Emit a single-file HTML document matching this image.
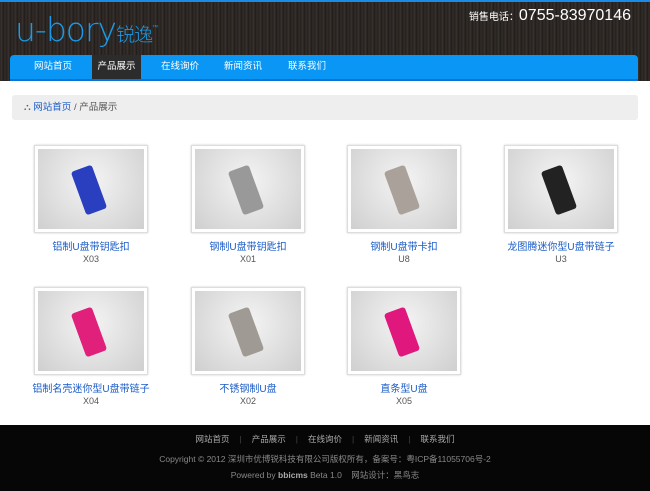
<!DOCTYPE html><html><head><meta charset="utf-8"><style>
*{margin:0;padding:0;box-sizing:border-box}
body{width:650px;height:491px;overflow:hidden;background:#fff;font-family:"Liberation Sans","Noto Sans CJK SC",sans-serif;font-size:9px;color:#555;position:relative}
.hd{position:absolute;left:0;top:0;width:650px;height:81px;background:repeating-linear-gradient(90deg,#2a2522 0,#3a3430 2px,#1e1a18 3px,#332d29 5px,#25201d 7px);border-top:2px solid #1a8ce8}
.logo{position:absolute;left:15px;top:8px;color:#1a9ae8;font-size:33px;letter-spacing:-1px;font-family:"DejaVu Sans",sans-serif;font-weight:200}
.logo span{font-size:19px;font-family:"Noto Sans CJK SC",sans-serif}
.tel{position:absolute;right:19px;top:5px;color:#fff;font-size:16px}
.tel small{font-size:10px}
.nav{position:absolute;left:10px;top:53px;width:628px;height:26px;background:#0996f5;border-radius:4px 4px 0 0;border-bottom:2px solid #0a74d6}
.nav a{position:absolute;top:0;height:24px;line-height:24px;color:#fff;font-size:9.5px}
.nav .on{background:#2c2c2c;left:82px;width:49px;text-align:center}
.bc{position:absolute;left:12px;top:95px;width:626px;height:25px;background:#eee;border-radius:3px;line-height:25px;padding-left:12px;color:#555;font-size:9.5px}
.bc b{color:#1a5bc8;font-weight:normal}
.p{position:absolute;width:114px;text-align:center}
.im{width:114px;height:88px;border:1px solid #ddd;padding:3px;background:#fff;box-shadow:0 0 2px #ccc}
.im div{width:100%;height:100%;background:radial-gradient(circle at 50% 40%,#f4f4f4,#cfcfcf);position:relative;overflow:hidden}
.im i{position:absolute;left:38%;top:22%;width:22px;height:46px;border-radius:3px;transform:rotate(-20deg)}
.t{color:#1a5bc8;font-size:10px;margin-top:5px;white-space:nowrap;margin-left:-20px;margin-right:-20px}
.c{color:#555;font-size:9px;margin-top:1px}
.ft{position:absolute;left:0;top:425px;width:650px;height:66px;background:#060606;text-align:center;color:#888;font-size:8.5px}
.ft .m{margin-top:8px;color:#aaa}
.ft .m span{margin:0 10px}
.ft .m em{font-style:normal;color:#444}
</style></head><body>
<div class="hd">
<div class="logo">u-bory<span>锐逸</span><sup style="font-size:6px">™</sup></div>
<div class="tel"><small>销售电话：</small>0755-83970146</div>
<div class="nav">
<a style="left:24px">网站首页</a><a class="on">产品展示</a><a style="left:151px">在线询价</a><a style="left:214px">新闻资讯</a><a style="left:278px">联系我们</a>
</div></div>
<div class="bc">⛬ <b>网站首页</b> / 产品展示</div>

<div class="p" style="left:34px;top:145px"><div class="im"><div><i style="background:#2a3fc0"></i></div></div><div class="t">铝制U盘带钥匙扣</div><div class="c">X03</div></div>
<div class="p" style="left:191px;top:145px"><div class="im"><div><i style="background:#999"></i></div></div><div class="t">钢制U盘带钥匙扣</div><div class="c">X01</div></div>
<div class="p" style="left:347px;top:145px"><div class="im"><div><i style="background:#aaa29a"></i></div></div><div class="t">钢制U盘带卡扣</div><div class="c">U8</div></div>
<div class="p" style="left:504px;top:145px"><div class="im"><div><i style="background:#222"></i></div></div><div class="t">龙图腾迷你型U盘带链子</div><div class="c">U3</div></div>

<div class="p" style="left:34px;top:287px"><div class="im"><div><i style="background:#e0207a"></i></div></div><div class="t">铝制名壳迷你型U盘带链子</div><div class="c">X04</div></div>
<div class="p" style="left:191px;top:287px"><div class="im"><div><i style="background:#a09a94"></i></div></div><div class="t">不锈钢制U盘</div><div class="c">X02</div></div>
<div class="p" style="left:347px;top:287px"><div class="im"><div><i style="background:#e0187e"></i></div></div><div class="t">直条型U盘</div><div class="c">X05</div></div>

<div class="ft">
<div class="m"><span>网站首页</span><em>|</em><span>产品展示</span><em>|</em><span>在线询价</span><em>|</em><span>新闻资讯</span><em>|</em><span>联系我们</span></div>
<div style="margin-top:8px">Copyright © 2012 深圳市优博锐科技有限公司版权所有，备案号：粤ICP备11055706号-2</div>
<div style="margin-top:4px">Powered by <b style="color:#aaa">bbicms</b> Beta 1.0 &nbsp;&nbsp; 网站设计：黑鸟志</div>
</div>
</body></html>
